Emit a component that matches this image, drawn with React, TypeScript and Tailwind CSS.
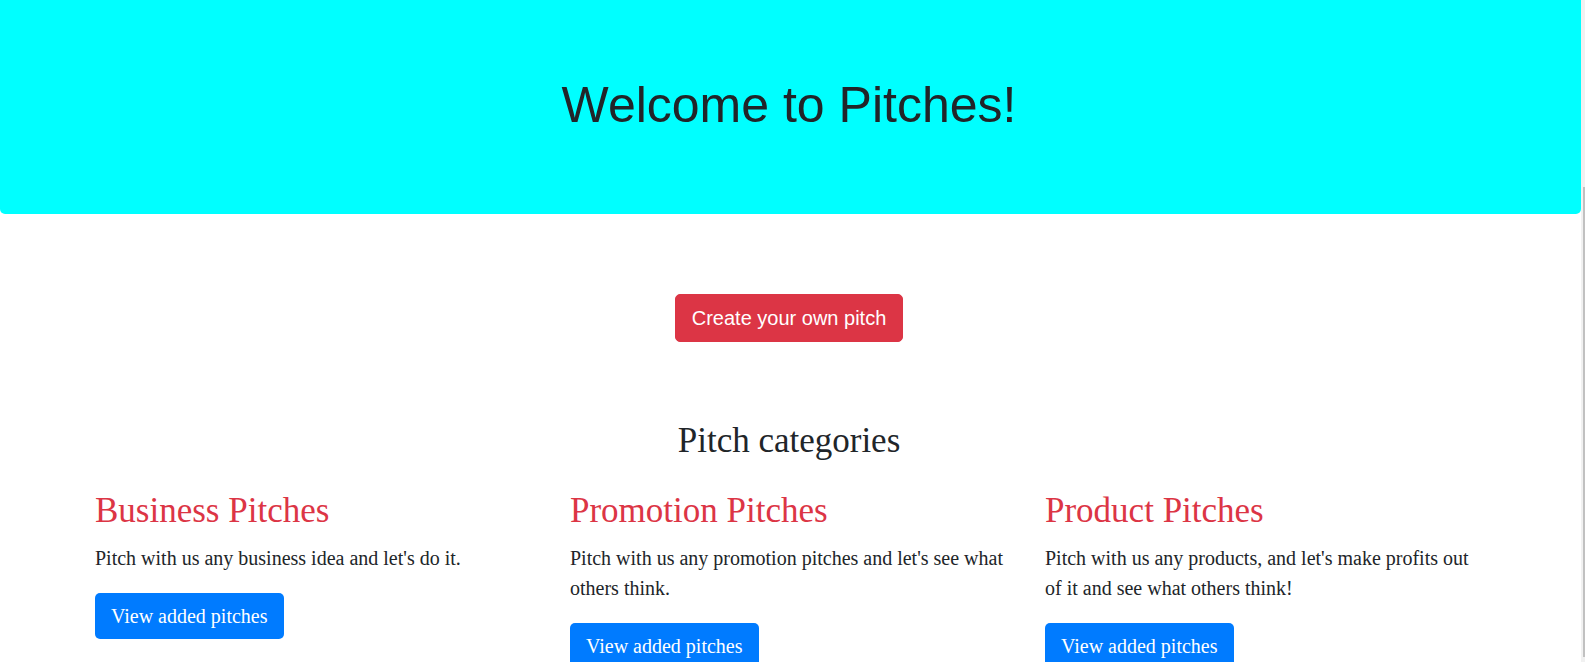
const categories = [
  {
    title: "Business Pitches",
    text: "Pitch with us any business idea and let's do it.",
  },
  {
    title: "Promotion Pitches",
    text: "Pitch with us any promotion pitches and let's see what others think.",
  },
  {
    title: "Product Pitches",
    text: "Pitch with us any products, and let's make profits out of it and see what others think!",
  },
];

export default function App() {
  return (
    <div className="flex h-[662px] w-[1585px] overflow-hidden bg-white text-[#212529]">
      <main className="flex w-[1581px] shrink-0 flex-col">
        {/* jumbotron */}
        <header className="h-[214px] shrink-0 rounded-b-[5px] bg-[#00ffff] pt-[75px] pr-[3px] text-center">
          <h1 className="font-['Liberation_Sans',sans-serif] text-[50px] leading-[60px] font-light">
            Welcome to Pitches!
          </h1>
        </header>

        <div className="flex w-[1578px] flex-col items-center font-['Liberation_Serif',serif]">
          <button className="mt-[80px] h-[48px] rounded-[5px] border border-[#dc3545] bg-[#dc3545] px-4 font-['Liberation_Sans',sans-serif] text-[20px] leading-[30px] text-white">
            Create your own pitch
          </button>

          <h2 className="mt-[78px] text-[35px] leading-[42px]">Pitch categories</h2>

          <div className="mt-[28px] flex self-stretch pl-[80px]">
            {categories.map((c) => (
              <div key={c.title} className="w-[475px] pl-[15px] pr-[22px]">
                <h3 className="mb-[11px] text-[35px] leading-[42px] text-[#dc3545]">{c.title}</h3>
                <p className="mb-[20px] text-[20px] leading-[30px]">{c.text}</p>
                <button className="h-[46px] rounded-[5px] bg-[#007bff] px-4 text-[20px] leading-[30px] text-white">
                  View added pitches
                </button>
              </div>
            ))}
          </div>
        </div>
      </main>

      {/* scrollbar edge */}
      <div className="w-[4px] shrink-0 bg-[#f1f1f1]">
        <div className="ml-[2px] mt-[187px] h-[470px] w-[2px] bg-[#c1c1c1]" />
      </div>
    </div>
  );
}
